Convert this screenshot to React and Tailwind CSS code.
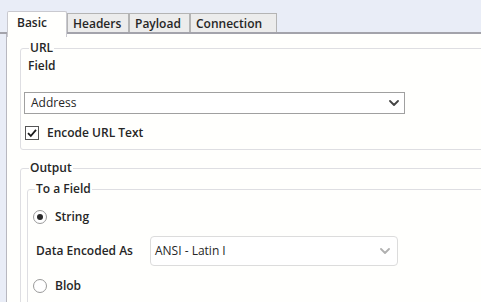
import React from 'react';

const Chevron = ({ className }) => (
  <svg width="10" height="6" viewBox="0 0 10 6" className={className}>
    <path d="M1 1 L5 5 L9 1" fill="none" stroke="currentColor" strokeWidth="1.8" strokeLinecap="round" strokeLinejoin="round" />
  </svg>
);

const Tab = ({ label, active, width }) =>
  active ? (
    <div className="h-[26px] -mb-[5px] w-[60px] pl-[9px] pt-[3px] bg-[#fffffd] border border-b-0 border-[#c9c9cf] rounded-t-[2px] relative z-10">
      {label}
    </div>
  ) : (
    <div className={`h-[19px] pl-[5px] pt-[1px] bg-[#ececec] border border-[#b4b4b4] border-b-0 leading-[17px] ${width}`}>
      {label}
    </div>
  );

const Radio = ({ checked, label }) => (
  <div className="flex items-center gap-[8px] pl-[5px]">
    <div className="w-[14px] h-[14px] rounded-full border border-[#9a9a9a] bg-white flex items-center justify-center">
      {checked && <div className="w-[6px] h-[6px] rounded-full bg-[#2a2a2a]" />}
    </div>
    <span className="font-semibold">{label}</span>
  </div>
);

const App = () => {
  return (
    <div
      className="w-[481px] h-[302px] overflow-hidden bg-[#e9edf7] text-[12px] leading-[16px] text-[#262626] flex flex-col"
      style={{ fontFamily: '"Open Sans", "Noto Sans", sans-serif' }}
    >
      {/* tab strip */}
      <div className="mt-[11px] flex items-end pl-[7px] border-b-2 border-[#a3a3ab] font-semibold">
        <Tab label="Basic" active />
        <Tab label="Headers" width="w-[62px]" />
        <Tab label="Payload" width="w-[61px]" />
        <Tab label="Connection" width="w-[87px]" />
      </div>

      {/* panel */}
      <div className="flex-1 ml-[6px] border-l border-[#b8b8c0] bg-[#fffffd] pl-[13px] pt-[6px]">
        <fieldset className="border border-[#dedee2] rounded-[3px] w-[480px] pb-[8px]">
          <legend className="ml-[8px] px-[1px] font-semibold">URL</legend>
          <div className="pl-[7px] mt-[2px] font-semibold">Field</div>
          <div className="ml-[3px] mt-[18px] w-[381px] h-[22px] border border-[#a0a0a0] bg-white flex items-center justify-between pl-[6px] pr-[5px]">
            <span>Address</span>
            <Chevron className="text-[#444]" />
          </div>
          <div className="mt-[11px] ml-[4px] flex items-center gap-[8px]">
            <div className="w-[14px] h-[14px] border border-[#555] bg-white flex items-center justify-center">
              <svg width="12" height="12" viewBox="0 0 12 12">
                <path d="M2 6.2 L4.8 9 L10 2.8" fill="none" stroke="#1a1a1a" strokeWidth="1.8" />
              </svg>
            </div>
            <span className="font-semibold">Encode URL Text</span>
          </div>
        </fieldset>

        <fieldset className="mt-[10px] border border-[#dedee2] rounded-[3px] w-[480px]">
          <legend className="ml-[8px] px-[1px] font-semibold">Output</legend>
          <fieldset className="mt-[5px] ml-[6px] border border-[#dedee2] rounded-[3px] pb-[20px]">
            <legend className="ml-[7px] px-[1px] font-semibold">To a Field</legend>
            <div className="mt-[12px]">
              <Radio checked label="String" />
            </div>
            <div className="mt-[11px] flex items-center pl-[8px]">
              <span className="font-semibold w-[114px]">Data Encoded As</span>
              <div className="w-[248px] h-[30px] border border-[#dcdcdc] rounded-[4px] bg-white flex items-center justify-between pl-[4px] pr-[7px]">
                <span>ANSI - Latin I</span>
                <Chevron className="text-[#b0b0b0]" />
              </div>
            </div>
            <div className="mt-[12px]">
              <Radio label="Blob" />
            </div>
          </fieldset>
        </fieldset>
      </div>
    </div>
  );
};

export default App;
